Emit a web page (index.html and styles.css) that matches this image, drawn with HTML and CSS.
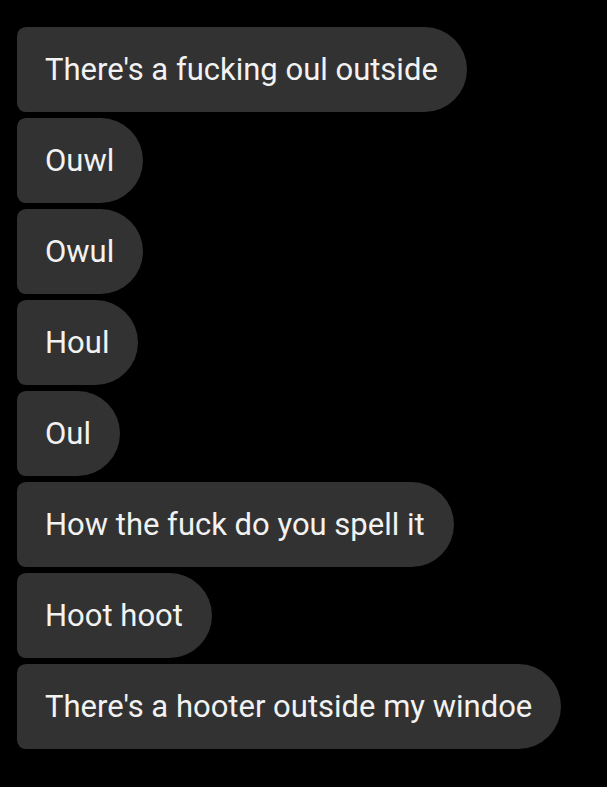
FILE: index.html
```html
<!DOCTYPE html>
<html>
<head>
<meta charset="utf-8">
<link rel="stylesheet" href="styles.css">
</head>
<body>
<div class="thread">
  <div class="bubble">There's a fucking oul outside</div>
  <div class="bubble">Ouwl</div>
  <div class="bubble">Owul</div>
  <div class="bubble">Houl</div>
  <div class="bubble">Oul</div>
  <div class="bubble">How the fuck do you spell it</div>
  <div class="bubble">Hoot hoot</div>
  <div class="bubble">There's a hooter outside my windoe</div>
</div>
</body>
</html>
```
FILE: styles.css
```css
html, body {
  margin: 0;
  padding: 0;
  background: #000;
}
body {
  width: 607px;
  height: 787px;
  overflow: hidden;
}
.thread {
  display: flex;
  flex-direction: column;
  align-items: flex-start;
  gap: 6px;
  padding: 27px 0 0 17px;
}
.bubble {
  display: flex;
  align-items: center;
  box-sizing: border-box;
  height: 85px;
  padding: 0 29px 0 28px;
  background: #323232;
  color: #f2f2f2;
  font-family: Roboto, "Liberation Sans", sans-serif;
  font-size: 31px;
  border-radius: 9px 43px 43px 9px;
  white-space: nowrap;
}
```
